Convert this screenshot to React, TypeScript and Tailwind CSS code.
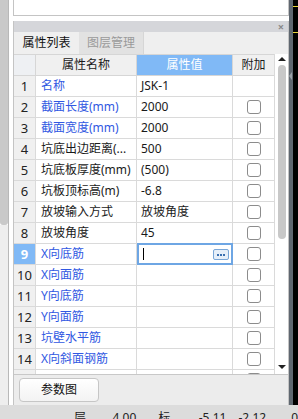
const rows = [
  { n: 1, name: "名称", val: "JSK-1", blue: true, cb: false },
  { n: 2, name: "截面长度(mm)", val: "2000", blue: true, cb: true },
  { n: 3, name: "截面宽度(mm)", val: "2000", blue: true, cb: true },
  { n: 4, name: "坑底出边距离(...", val: "500", blue: false, cb: true },
  { n: 5, name: "坑底板厚度(mm)", val: "(500)", blue: false, cb: true },
  { n: 6, name: "坑板顶标高(m)", val: "-6.8", blue: false, cb: true },
  { n: 7, name: "放坡输入方式", val: "放坡角度", blue: false, cb: true },
  { n: 8, name: "放坡角度", val: "45", blue: false, cb: true },
  { n: 9, name: "X向底筋", val: "", blue: true, cb: true },
  { n: 10, name: "X向面筋", val: "", blue: true, cb: true },
  { n: 11, name: "Y向底筋", val: "", blue: true, cb: true },
  { n: 12, name: "Y向面筋", val: "", blue: true, cb: true },
  { n: 13, name: "坑壁水平筋", val: "", blue: true, cb: true },
  { n: 14, name: "X向斜面钢筋", val: "", blue: true, cb: true },
  { n: 15, name: "", val: "", blue: true, cb: true },
];

function Checkbox() {
  return <div className="h-[14px] w-[14px] rounded-[3px] border border-[#8c8c8c] bg-white" />;
}

export default function App() {
  return (
    <div className="flex h-[419px] w-[298px] flex-col overflow-hidden bg-white font-['Noto_Sans','Noto_Sans_CJK_SC',sans-serif] text-[12px] text-[#1a1a1a]">
      <div className="flex h-[405px]">
        {/* left neighbour strip */}
        <div className="flex w-[9px] flex-col border-r border-[#b8b8b8]">
          <div className="h-[225px] rounded-b-[3px] bg-[#c9c9c9]" />
          <div className="flex-1 bg-[#eeeeee]" />
        </div>
        <div className="w-[4px] bg-white" />

        {/* center column */}
        <div className="flex w-[276px] flex-col bg-white">
          <div className="h-[16px] border-x border-b border-[#c4c4c4] bg-white" />
          <div className="h-[5px]" />
          <div className="flex flex-1 flex-col border-x border-[#c4c4c4] bg-[#efefef]">
            {/* title bar */}
            <div className="flex h-[11px] items-center justify-end bg-[#d5d6da] pr-[4px]">
              <span className="text-[11px] font-bold leading-none text-[#8a8a8a]">×</span>
            </div>
            {/* tabs */}
            <div className="flex h-[22px] items-stretch">
              <div className="flex w-[65px] items-center justify-center bg-[#efefef] leading-none text-[#111]">属性列表</div>
              <div className="flex w-[65px] items-center justify-center border-r border-[#d6d6d6] bg-[#e2e2e2] leading-none text-[#9a9a9a]">图层管理</div>
            </div>
            {/* table */}
            <div className="flex h-[321px] border-b border-[#c8c8c8]">
              <div className="flex w-[260px] flex-col overflow-hidden">
                <div className="flex h-[22px] shrink-0 border-y border-[#d6d6d6]">
                  <div className="w-[22px] border-r border-[#d6d6d6] bg-[#eef0f3]" />
                  <div className="flex w-[101px] items-center justify-center border-r border-[#d6d6d6] bg-[#f0f0f0] leading-none">属性名称</div>
                  <div className="flex w-[96px] items-center justify-center border-r border-[#d6d6d6] bg-[#80b9f6] leading-none text-white">属性值</div>
                  <div className="flex w-[41px] items-center justify-center bg-[#f0f0f0] leading-none">附加</div>
                </div>
                {rows.map((r) => {
                  const editing = r.n === 9;
                  return (
                    <div key={r.n} className="flex h-[21px] shrink-0 border-b border-[#dadada]">
                      <div
                        className={`flex w-[22px] items-center justify-center border-r border-[#dadada] text-[13px] leading-none ${
                          editing ? "bg-[#80b9f6] font-bold text-white" : "bg-[#f0f0f0] text-[#222]"
                        }`}
                      >
                        {r.n < 15 ? r.n : ""}
                      </div>
                      <div
                        className={`flex w-[101px] items-center overflow-hidden whitespace-nowrap border-r border-[#dadada] bg-white pl-[5px] leading-none ${
                          r.blue ? "text-[#3158e2]" : "text-[#1a1a1a]"
                        }`}
                      >
                        {r.name}
                      </div>
                      {editing ? (
                        <div className="relative -mt-px flex h-[22px] w-[96px] items-center border-2 border-[#6ea6e4] bg-white pl-[4px]">
                          <div className="h-[12px] w-px bg-black" />
                          <div className="absolute right-[2px] top-[4px] flex h-[11px] w-[16px] items-center justify-center gap-[1px] rounded-[2px] border border-[#7aa7d8] bg-[#e6eff9]">
                            <span className="h-[2px] w-[2px] bg-[#3a6fb0]" />
                            <span className="h-[2px] w-[2px] bg-[#3a6fb0]" />
                            <span className="h-[2px] w-[2px] bg-[#3a6fb0]" />
                          </div>
                        </div>
                      ) : (
                        <div className="flex w-[96px] items-center whitespace-nowrap border-r border-[#dadada] bg-white pl-[4px] leading-none">
                          {r.val}
                        </div>
                      )}
                      <div className="flex w-[41px] items-center justify-center bg-white">{r.cb && <Checkbox />}</div>
                    </div>
                  );
                })}
              </div>
              {/* scrollbar */}
              <div className="flex w-[14px] flex-col items-center border-l border-[#dadada] bg-white pt-[3px]">
                <div className="h-0 w-0 border-x-[4px] border-b-[4px] border-x-transparent border-b-[#222]" />
                <div className="mt-[4px] h-[174px] w-[8px] rounded-full bg-[#c8c8c8]" />
                <div className="flex-1" />
                <div className="mb-[5px] h-0 w-0 border-x-[4px] border-t-[4px] border-x-transparent border-t-[#222]" />
              </div>
            </div>
            {/* bottom area */}
            <div className="flex flex-1 items-start bg-[#ececec] pl-[5px] pt-[3px]">
              <button
                type="button"
                className="flex h-[24px] w-[80px] items-center justify-center rounded-[4px] border border-[#c6c6c6] bg-gradient-to-b from-white to-[#f3f3f3] text-[12px] leading-none text-[#111]"
              >
                参数图
              </button>
            </div>
          </div>
        </div>

        {/* right neighbour strips */}
        <div className="relative w-[4px] bg-[#5f6770]">
          <div className="absolute left-0 top-[72px] h-0 w-0 border-y-[4px] border-r-[3px] border-y-transparent border-r-[#9aa1a8]" />
        </div>
        <div className="flex w-[5px] flex-col bg-black">
          <div className="mt-[6px] h-px w-full bg-[#e8d53a]" />
          <div className="mt-[25px] h-px w-full bg-[#e8d53a]" />
        </div>
      </div>

      {/* status bar */}
      <div className="flex h-[14px] overflow-hidden bg-[#dcdcdc] pt-[7px] text-[12px] leading-[12px] text-[#222]">
        <span className="ml-[74px]">层高</span>
        <span className="ml-[18px]">4.00</span>
        <span className="ml-[22px]">标高</span>
        <span className="ml-[20px]">-5.11</span>
        <span className="ml-[12px]">-2.12</span>
        <span className="ml-[25px]">0</span>
      </div>
    </div>
  );
}
